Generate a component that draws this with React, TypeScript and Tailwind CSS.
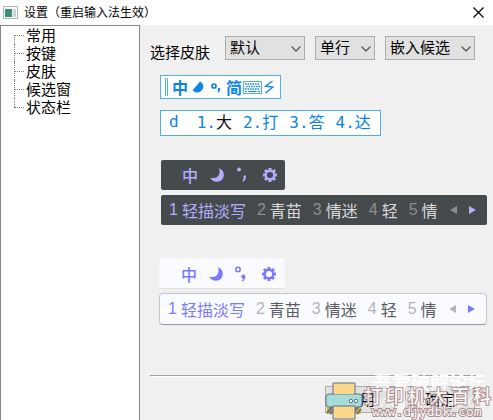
import { ChevronDown } from 'lucide-react';

const menuItems = ['常用', '按键', '皮肤', '候选窗', '状态栏'];

const candidates = ['轻描淡写', '青苗', '情迷', '轻', '情'];

const inlineCandidates = ['大', '打', '答', '达'];

function SelectBox({ id, label, options, width }: { id: string; label: string; options: string[]; width: string }) {
  return (
    <div className={`relative h-6 ${width}`}>
      <select
        id={id}
        aria-label={label}
        className="block h-6 w-full appearance-none border border-[#adadad] bg-[#e1e1e1] pl-1 pb-0.5 text-[15px] leading-5 text-black"
      >
        {options.map((option) => (
          <option key={option}>{option}</option>
        ))}
      </select>
      <ChevronDown className="pointer-events-none absolute right-px top-[5px] h-4 w-4 text-[#555]" strokeWidth={2} />
    </div>
  );
}

function MoonIcon() {
  return (
    <svg viewBox="0 0 14 14" className="h-3.5 w-3.5" fill="currentColor">
      <path d="M8.6 0.2C12 1 14 3.8 13.8 7.3C13.5 11 10.6 13.8 7 13.8C4 13.8 1.3 12.2 0.2 9.4C2.5 10.6 5.6 10.2 7.6 8.4C9.9 6.3 10.3 2.9 8.6 0.2Z" />
    </svg>
  );
}

function PunctuationIcon({ hollow = false }: { hollow?: boolean }) {
  return (
    <svg viewBox="0 0 15 16" className="h-4 w-[15px]" fill="currentColor">
      {hollow ? (
        <>
          <circle cx="3" cy="3.5" r="2.2" fill="none" stroke="currentColor" strokeWidth="1.6" />
          <path d="M6.2 10.6a2.1 2.1 0 1 1 4.2 0c0 2.4-1 4.200-3.600 4.900v-1.400c1-.4 1.600-1 1.600-1.700a1.900 1.900 0 0 1-2.200-1.800Z" />
        </>
      ) : (
        <>
          <circle cx="3" cy="2.5" r="2" />
          <path d="M7.600 8.500h2.400c.1 2.600-.7 4.800-2.200 6H6.200C7.300 12.900 7.800 10.900 7.600 8.500Z" />
        </>
      )}
    </svg>
  );
}

function GearIcon() {
  return (
    <svg viewBox="0 0 14 14" className="h-3.5 w-3.5">
      <path
        d="M7 0v14M0 7h14M2 2l10 10M12 2L2 12"
        stroke="currentColor"
        strokeWidth="3"
      />
      <circle cx="7" cy="7" r="5.400" fill="currentColor" />
      <circle cx="7" cy="7" r="3.100" className="fill-(--skin-bg)" />
    </svg>
  );
}

function StatusIcons({ hollow }: { hollow?: boolean }) {
  return (
    <>
      <span className="w-4 text-base leading-5 font-medium">中</span>
      <MoonIcon />
      <PunctuationIcon hollow={hollow} />
      <GearIcon />
    </>
  );
}

function CandidateBar({ className, accent, muted, text }: { className: string; accent: string; muted: string; text: string }) {
  return (
    <div className={`flex items-center pl-2 text-base leading-5 ${className}`}>
      <ol className="flex gap-[11px]">
        {candidates.map((word, i) => (
          <li key={i} className={`flex gap-1 whitespace-nowrap ${i === 0 ? accent : text}`}>
            <span className={`font-['Liberation_Sans',sans-serif] ${i === 0 ? accent : muted}`}>{i + 1}</span>
            <span>{word}</span>
          </li>
        ))}
      </ol>
      <svg viewBox="0 0 7 8" className={`ml-3 h-2 w-[7px] ${muted}`} fill="currentColor">
        <path d="M7 0v8L0 4Z" />
      </svg>
      <svg viewBox="0 0 7 8" className={`ml-3 h-2 w-[7px] ${accent}`} fill="currentColor">
        <path d="M0 0v8l7-4Z" />
      </svg>
    </div>
  );
}

function DefaultSkin() {
  return (
    <div className="text-[#0a84e8]">
      {/* Status bar */}
      <div className="flex h-6 w-[121px] items-center border border-[#4db2ea] bg-white pl-1">
        <span className="h-[18px] w-[3px] border-x border-[#4db2ea]" />
        <span className="ml-1 text-base leading-5 font-bold">中</span>
        <svg viewBox="0 0 12 12" className="ml-1 h-3 w-3" fill="currentColor">
          <path d="M8 0.500C11 2 12 5 10.800 7.800C9.600 10.600 6.500 12 3.500 11.200L0.500 9.600Z" />
        </svg>
        <svg viewBox="0 0 12 12" className="ml-1.5 h-3 w-3">
          <circle cx="4" cy="5" r="2" fill="none" stroke="currentColor" strokeWidth="1.700" />
          <path d="M8 7h2.200c.2 2-.4 3.500-1.700 4.600H7.400C8.200 10.200 8.400 8.700 8 7Z" fill="currentColor" />
        </svg>
        <span className="ml-1 text-base leading-5 font-bold">简</span>
        <svg viewBox="0 0 19 13" className="ml-px h-[13px] w-[19px] shrink-0" fill="none" stroke="currentColor">
          <path d="M.5 .5h18v12H.5Z" strokeOpacity="0.7" />
          <path d="M2 3h15M3 5.500h14M2 8h15" strokeDasharray="1.500 1" strokeWidth="1.500" />
          <path d="M2 10.500h2M5.500 10.500h8M15 10.500h2" />
        </svg>
        <svg viewBox="0 0 10 14" className="ml-0.5 h-3.5 w-2.5 shrink-0" fill="none" stroke="currentColor" strokeWidth="1.400">
          <path d="M8.500 1L1.500 6.200L9 7L1.500 13" />
        </svg>
      </div>

      {/* Candidates */}
      <div className="mt-[11px] flex h-[26px] w-[221px] items-center border border-[#4db2ea] bg-white pl-2 font-['DejaVu_Sans_Mono','Noto_Sans_CJK_SC',monospace] text-base leading-5">
        <span className="pb-0.5">d</span>
        <ol className="ml-[18px] flex gap-[11px]">
          {inlineCandidates.map((word, i) => (
            <li key={word} className="whitespace-nowrap">
              {i + 1}.<span className={i === 0 ? 'text-[#101020]' : ''}>{word}</span>
            </li>
          ))}
        </ol>
      </div>
    </div>
  );
}

function Watermark() {
  return (
    <div className="pointer-events-none absolute right-0 bottom-0 h-[50px] w-[170px] whitespace-nowrap">
      <div className="absolute top-0 right-2 w-28 text-white">
        <p className="text-[19px] leading-6 font-medium">吾爱破解论坛</p>
        <p className="font-['Liberation_Sans',sans-serif] text-base leading-4 opacity-70">www.52pojie.cn</p>
      </div>
      <svg viewBox="0 0 38 38" className="absolute top-3 left-0.5 h-[38px] w-[38px]" stroke="#5f7186">
        <path d="M2 24h34v8H2Z" fill="#e8b923" stroke="none" />
        <path d="M2 31l6-7M5 32l5-6M28 32l6-8M32 32l4-5" strokeWidth="2" />
        <path d="M8 1h22v13H8Z" fill="#fbd78c" />
        <rect x="1" y="12" width="36" height="13" rx="3" fill="#a7dcd8" />
        <path d="M9 12V2h20v10Z" fill="#fbd78c" stroke="none" />
        <path d="M8 24h22v13H8Z" fill="#fbd78c" />
        <circle cx="26" cy="19" r="1.700" fill="#fff" />
        <circle cx="31" cy="19" r="1.700" fill="#fff" />
      </svg>
      <div className="absolute right-0.5 bottom-0 w-[127px] text-white opacity-80 [-webkit-text-stroke:2px_#a07678] [paint-order:stroke_fill]">
        <p className="flex justify-between text-lg leading-[18px] font-medium">
          {Array.from('打印机大百科').map((char) => (
            <span key={char}>{char}</span>
          ))}
        </p>
        <p className="pl-2 font-['DejaVu_Sans_Mono',monospace] text-[13px] leading-4">www.djydbk.com</p>
      </div>
    </div>
  );
}

export default function App() {
  return (
    <div className="relative flex min-h-screen flex-col overflow-hidden bg-[#f0f0f0] font-['Noto_Sans_CJK_SC',sans-serif] text-[15px] text-black">
      {/* Title bar */}
      <header className="flex h-[25px] items-center bg-white pr-[9px] pl-[3px]">
        <svg viewBox="0 0 15 13" className="h-[13px] w-[15px]">
          <path d="M.5 .5h14v12H.5Z" fill="#fff" stroke="#a9b4bd" />
          <path d="M2 3h7v8H2Z" fill="#3d8f74" />
          <path d="M10 3h3v8h-3Z" fill="#ccd3d8" />
        </svg>
        <h1 className="ml-1.5 pb-0.5 text-xs">设置（重启输入法生效）</h1>
        <button type="button" aria-label="关闭" className="ml-auto">
          <svg viewBox="0 0 11 11" className="h-[11px] w-[11px]" stroke="#000" strokeWidth="1.200">
            <path d="M.5 .5l10 10M10.500 .5l-10 10" />
          </svg>
        </button>
      </header>

      <div className="flex flex-1">
        {/* Navigation */}
        <nav className="w-[140px] shrink-0 border border-b-0 border-[#828790] bg-white">
          <ul>
            {menuItems.map((item, i) => (
              <li key={item} className="relative h-[18px] pl-[25px] leading-[18px]">
                <span
                  className={`absolute left-[13px] w-px border-l border-dotted border-[#808080] ${
                    i === 0 ? 'top-[9px] h-[9px]' : i === menuItems.length - 1 ? 'top-0 h-[9px]' : 'top-0 h-full'
                  }`}
                />
                <span className="absolute top-[9px] left-[13px] w-2.5 border-t border-dotted border-[#808080]" />
                <a href="#">{item}</a>
              </li>
            ))}
          </ul>
        </nav>

        {/* Skin settings */}
        <main className="flex min-w-0 flex-1 flex-col pt-[11px] pr-1.5 pb-[7px] pl-2.5">
          <div className="flex h-6 gap-2.5">
            <label htmlFor="skin" className="w-[65px] pt-1.5 leading-5">
              选择皮肤
            </label>
            <SelectBox id="skin" label="选择皮肤" options={['默认', '轻描淡写']} width="w-20" />
            <SelectBox id="lines" label="行数" options={['单行', '双行']} width="w-[60px]" />
            <SelectBox id="mode" label="候选模式" options={['嵌入候选', '独立候选']} width="w-[90px]" />
          </div>

          <div className="mt-[15px] ml-2.5">
            <DefaultSkin />
          </div>

          <div className="mt-6 ml-[11px] text-[#b4aeff] [--skin-bg:#454a4d]">
            <div className="flex h-[30px] w-[124px] items-center gap-3 rounded-xs bg-[#454a4d] pl-[21px]">
              <StatusIcons />
            </div>
            <CandidateBar
              className="mt-[5px] h-[30px] rounded-xs bg-[#454a4d]"
              accent="text-[#b4aeff]"
              muted="text-[#8c8f91]"
              text="text-[#d8d8da]"
            />
          </div>

          <div className="mt-[33px] ml-[9px] text-[#7a7aff] [--skin-bg:#fafbff]">
            <div className="flex h-[31px] w-[126px] items-center gap-3 rounded-xs border border-[#f6f6f8] border-b-[#e2e2e4] bg-[#fafbff] pl-[21px]">
              <StatusIcons hollow />
            </div>
            <CandidateBar
              className="mt-1 h-8 rounded-sm border border-[#c8c8ca] border-b-[#98989a] bg-[#fafbff]"
              accent="text-[#7a7aff]"
              muted="text-[#b4b5ba]"
              text="text-[#5b5d63]"
            />
          </div>

          <div className="mt-auto mr-1 h-0.5 border-t border-b border-t-[#a0a0a0] border-b-white" />
          <div className="mt-[9px] mr-3 flex justify-end gap-2.5">
            <button type="button" className="h-[27px] w-[70px] border border-[#adadad] bg-[#e1e1e1]">
              应用
            </button>
            <button type="button" className="h-[27px] w-[70px] border border-[#adadad] bg-[#e1e1e1]">
              确定
            </button>
          </div>
        </main>
      </div>

      <Watermark />
    </div>
  );
}
